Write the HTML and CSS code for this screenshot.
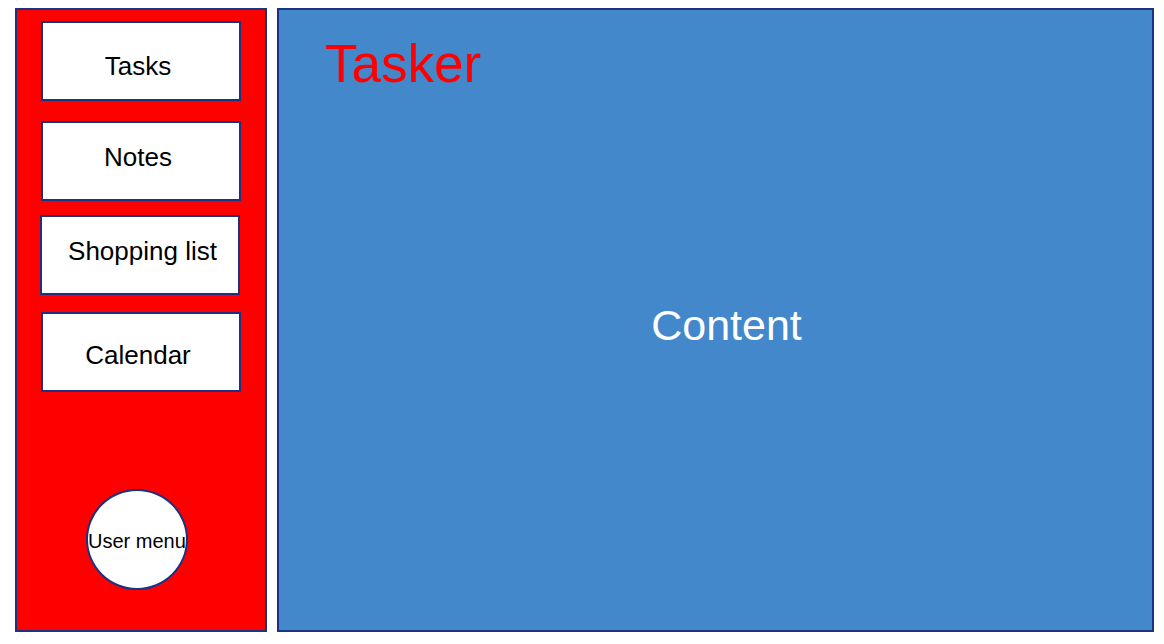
FILE: index.html
```html
<!DOCTYPE html>
<html lang="en">
<head>
<meta charset="utf-8">
<meta name="viewport" content="width=device-width, initial-scale=1">
<title>Tasker</title>
<link rel="stylesheet" href="styles.css">
</head>
<body class="app">
<aside class="sidebar">
  <nav class="nav" aria-label="Main">
    <button class="nav-button nav-tasks" type="button">Tasks</button>
    <button class="nav-button nav-notes" type="button">Notes</button>
    <button class="nav-button nav-shopping" type="button">Shopping list</button>
    <button class="nav-button nav-calendar" type="button">Calendar</button>
  </nav>
  <button class="user-menu" type="button">User menu</button>
</aside>
<main class="panel">
  <h1 class="title">Tasker</h1>
  <p class="content">Content</p>
</main>
</body>
</html>
```

FILE: styles.css
```css
* {
  box-sizing: border-box;
}

.app {
  display: flex;
  gap: 10px;
  min-height: 100vh;
  margin: 0;
  padding: 8px 10px 12px 15px;
  background: #fff;
  color: #000;
  font-family: "Liberation Sans", Arial, sans-serif;
}

.sidebar {
  display: flex;
  flex: 0 0 252px;
  flex-direction: column;
  padding: 11px 24px 40px;
  background: #f00;
  border: 2px solid #1b3281;
}

.nav {
  display: flex;
  flex-direction: column;
}

.nav-button,
.user-menu {
  color: inherit;
  font-family: inherit;
  background: #fff;
  border: 2px solid #1b3281;
  cursor: pointer;
}

.nav-button {
  height: 80px;
  padding: 0 6px 0 0;
  font-size: 26px;
  line-height: 30px;
  text-align: center;
}

.nav-tasks {
  padding-top: 10px;
  margin-bottom: 20px;
}

.nav-notes {
  padding-bottom: 8px;
  margin-bottom: 14px;
}

.nav-shopping {
  width: 200px;
  margin: 0 0 17px -1px;
  padding: 0 0 8px 5px;
}

.nav-calendar {
  padding-top: 6px;
}

.user-menu {
  align-self: center;
  width: 102px;
  height: 101px;
  margin: auto 8px 0 0;
  padding: 3px 2px 0 0;
  border-radius: 50%;
  font-size: 20px;
  line-height: 24px;
  white-space: nowrap;
}

.panel {
  display: flex;
  flex: 1;
  flex-direction: column;
  padding: 24px 46px;
  background: #4488cc;
  border: 2px solid #1b3281;
}

.title {
  margin: 0;
  color: #f00;
  font-size: 53px;
  font-weight: 400;
  line-height: 60px;
}

.content {
  display: flex;
  flex: 1;
  align-items: center;
  justify-content: center;
  margin: 0;
  padding: 0 0 50px 22px;
  color: #fff;
  font-size: 43px;
  line-height: 50px;
}
```
